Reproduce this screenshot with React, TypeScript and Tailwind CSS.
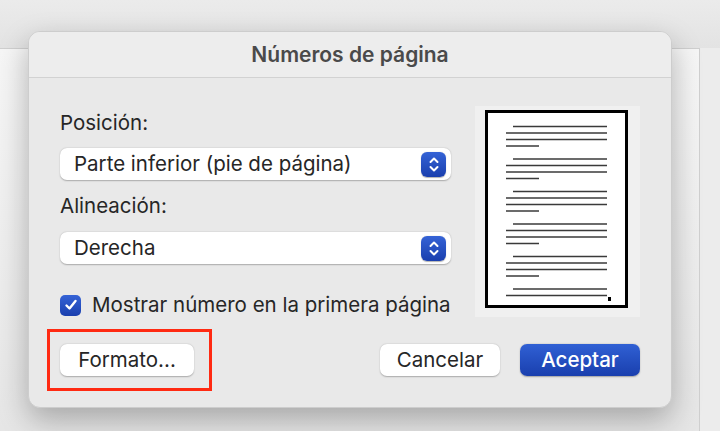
import React from 'react';

const font = { fontFamily: 'Inter, "Noto Sans", sans-serif' };

function Stepper() {
  return (
    <div className="flex h-[25px] w-[25px] items-center justify-center rounded-[6px] bg-gradient-to-b from-[#3563d6] to-[#1a3fae] shadow-[0_0.5px_1px_rgba(0,0,0,0.3)]">
      <svg width="12" height="17" viewBox="0 0 12 17" fill="none" stroke="#fff" strokeWidth="2" strokeLinecap="round" strokeLinejoin="round">
        <path d="M2.5 6 L6 2.5 L9.5 6" />
        <path d="M2.5 11 L6 14.5 L9.5 11" />
      </svg>
    </div>
  );
}

function Select({ value }: { value: string }) {
  return (
    <div className="flex h-[32px] items-center justify-between rounded-[7px] bg-white pl-[14px] pr-[5px] shadow-[0_0.5px_1.5px_rgba(0,0,0,0.28)]">
      <span className="text-[20.5px] leading-[24px] text-[#262626]">{value}</span>
      <Stepper />
    </div>
  );
}

function Preview() {
  const groups = [0, 1, 2, 3, 4, 5];
  return (
    <div className="h-[211px] w-[165px] bg-[#f0f0f0]">
      <svg width="165" height="211" viewBox="0 0 165 211">
        <rect x="11.5" y="5.5" width="140" height="195" fill="#fff" stroke="#000" strokeWidth="3" />
        {groups.map((g) => {
          const y = 20.5 + g * 32.5;
          const last = g === 5;
          return (
            <g key={g} stroke="#3a3a3a" strokeWidth="1.3">
              <line x1="38" x2="132" y1={y} y2={y} />
              <line x1="31" x2="132" y1={y + 6.5} y2={y + 6.5} />
              {!last && <line x1="31" x2="132" y1={y + 13} y2={y + 13} />}
              {!last && <line x1="31" x2="64" y1={y + 19.5} y2={y + 19.5} />}
            </g>
          );
        })}
        <rect x="133" y="191" width="3" height="4" fill="#000" />
      </svg>
    </div>
  );
}

export default function App() {
  return (
    <div className="relative h-[431px] w-[720px] overflow-hidden bg-[#e8e8e8]" style={font}>
      {/* document behind the sheet */}
      <div className="h-[48px] bg-gradient-to-b from-[#ebebeb] to-[#e3e3e3]" />
      <div className="flex h-[383px]">
        <div className="w-[700px] border-r border-t border-[#cfcfcf] bg-gradient-to-b from-[#f6f6f6] to-[#e6e6e6]" />
        <div className="flex-1 bg-[#ececec]" />
      </div>

      {/* dialog */}
      <div className="absolute left-[28px] top-[31px] flex h-[377px] w-[644px] flex-col overflow-hidden rounded-[12px] border border-[#cdcdcd] bg-[#e9e9e9] shadow-[0_12px_30px_rgba(0,0,0,0.28)]">
        <div className="flex h-[46px] shrink-0 items-center justify-center border-b border-[#d2d2d2] bg-[#ededed]">
          <span className="text-[21px] font-semibold leading-[26px] text-[#4a4a4a]">Números de página</span>
        </div>

        <div className="flex flex-1 flex-col px-[31px] pb-[31px]">
          <div className="flex gap-[24px] pt-[28px]">
            <div className="flex w-[391px] flex-col">
              <div className="mt-[5px] text-[20.5px] leading-[24px] text-[#262626]">Posición:</div>
              <div className="mt-[13px]">
                <Select value="Parte inferior (pie de página)" />
              </div>
              <div className="mt-[14px] text-[20.5px] leading-[24px] text-[#262626]">Alineación:</div>
              <div className="mt-[14px]">
                <Select value="Derecha" />
              </div>
              <div className="mt-[29px] flex items-center gap-[11px]">
                <div className="flex h-[21px] w-[21px] items-center justify-center rounded-[5px] bg-gradient-to-b from-[#3563d6] to-[#1a3fae]">
                  <svg width="14" height="14" viewBox="0 0 14 14" fill="none" stroke="#fff" strokeWidth="2.4" strokeLinecap="round" strokeLinejoin="round">
                    <path d="M2.5 7.5 L5.5 10.5 L11.5 3" />
                  </svg>
                </div>
                <span className="text-[20.5px] leading-[24px] text-[#262626]">Mostrar número en la primera página</span>
              </div>
            </div>
            <Preview />
          </div>

          <div className="mt-auto flex items-center">
            <div className="relative">
              <button className="h-[32px] w-[134px] rounded-[7px] bg-white text-[20.5px] text-[#262626] shadow-[0_0.5px_1.5px_rgba(0,0,0,0.28)]">
                Formato...
              </button>
              <div className="absolute -bottom-[15px] -left-[13px] -right-[18px] -top-[15px] border-[3px] border-[#ff2a12]" />
            </div>
            <div className="ml-auto flex gap-[20px]">
              <button className="h-[32px] w-[120px] rounded-[7px] bg-white text-[20.5px] text-[#262626] shadow-[0_0.5px_1.5px_rgba(0,0,0,0.28)]">
                Cancelar
              </button>
              <button className="h-[32px] w-[120px] rounded-[7px] bg-gradient-to-b from-[#3060d4] to-[#1a3fae] text-[20.5px] font-medium text-white shadow-[0_0.5px_1.5px_rgba(0,0,0,0.3)]">
                Aceptar
              </button>
            </div>
          </div>
        </div>
      </div>
    </div>
  );
}
